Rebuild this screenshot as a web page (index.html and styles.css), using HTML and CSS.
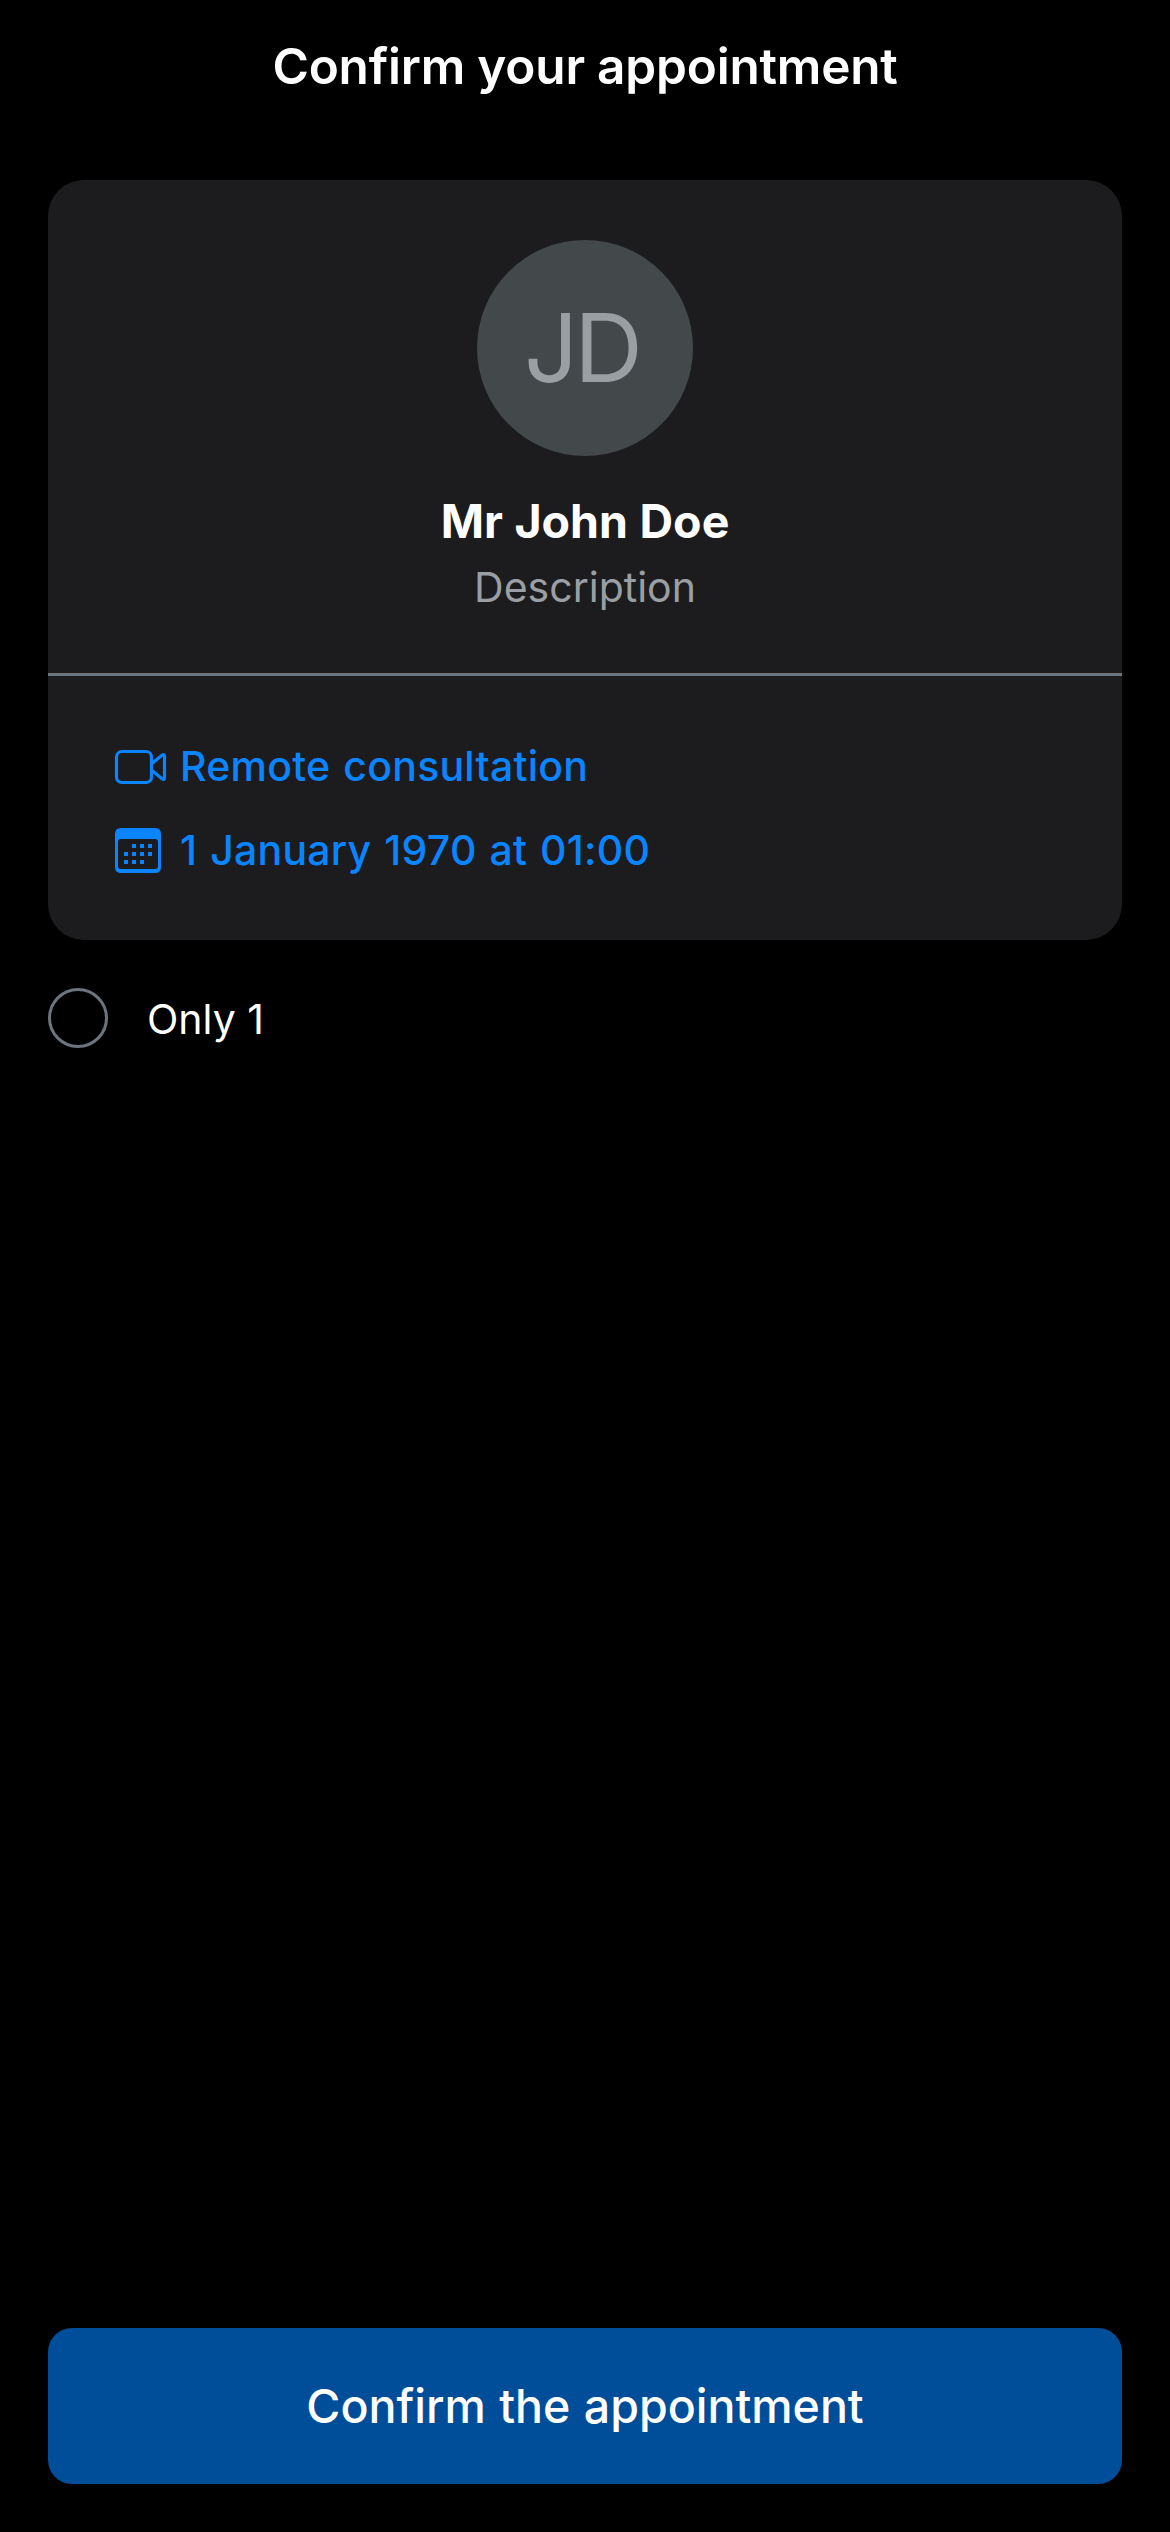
FILE: index.html
```html
<!DOCTYPE html>
<html lang="en">
<head>
<meta charset="utf-8">
<title>Confirm your appointment</title>
<link rel="stylesheet" href="styles.css">
</head>
<body>
<div class="screen">
  <header class="header"><h1 class="title"><span>Confirm your appointment</span></h1></header>
  <main class="content">
    <section class="card">
      <div class="profile">
        <div class="avatar"><span>JD</span></div>
        <h2 class="name"><span>Mr John Doe</span></h2>
        <p class="description"><span>Description</span></p>
      </div>
      <div class="details">
        <div class="detail">
          <svg class="icon" width="54" height="51" viewBox="0 0 54 51" fill="none" stroke="currentColor" stroke-width="3.2" stroke-linejoin="round">
            <rect x="2.500" y="10.500" width="35" height="31" rx="5.500"/>
            <path d="M38 22.500 48 14.200Q50.500 12.500 50.500 15.500V36.500Q50.500 39.500 48 37.800L38 29.500"/>
          </svg>
          <span>Remote consultation</span>
        </div>
        <div class="detail">
          <svg class="icon" width="54" height="51" viewBox="0 0 54 51" fill="currentColor">
            <path fill-rule="evenodd" d="M7 3H41Q47 3 47 9V42Q47 48 41 48H7Q1 48 1 42V9Q1 3 7 3ZM7 14Q4 14 4 17V41Q4 44 7 44H41Q44 44 44 41V17Q44 14 41 14Z"/>
            <path d="M18 19h4v4h-4zM26 19h4v4h-4zM34 19h4v4h-4zM10 27h4v4h-4zM18 27h4v4h-4zM26 27h4v4h-4zM34 27h4v4h-4zM10 35h4v4h-4zM18 35h4v4h-4zM26 35h4v4h-4z"/>
          </svg>
          <span>1 January 1970 at 01:00</span>
        </div>
      </div>
    </section>
    <label class="option"><span class="radio"></span><span class="option-label">Only 1</span></label>
  </main>
  <footer class="footer"><button class="confirm" type="button"><span>Confirm the appointment</span></button></footer>
</div>
</body>
</html>
```

FILE: styles.css
```css
* { box-sizing: border-box; }
body { margin: 0; background: #000; color: #fff; font-family: Inter, "Liberation Sans", sans-serif; }
h1, h2, p { margin: 0; }
.screen { display: flex; flex-direction: column; width: 1170px; height: 2532px; padding: 0 48px 48px; }
.header { height: 132px; display: flex; align-items: center; justify-content: center; }
.title { font-size: 49.5px; line-height: 60px; font-weight: 600; letter-spacing: -0.2px; white-space: nowrap; }
.content { flex: 1; padding-top: 48px; }
.card { background: #1c1c1e; border-radius: 36px; overflow: hidden; }
.profile { display: flex; flex-direction: column; align-items: center; padding: 60px 0 61px; border-bottom: 3px solid #6c757d; }
.avatar { width: 216px; height: 216px; border-radius: 50%; background: #43484b; color: #9a9fa3; display: flex; align-items: center; justify-content: center; padding-right: 7px; font-size: 95px; line-height: 116px; letter-spacing: -4px; }
.name { margin-top: 36px; font-size: 46.5px; line-height: 58px; font-weight: 700; word-spacing: 0.5px; }
.description { margin-top: 12px; font-size: 41px; line-height: 50px; color: #9a9fa3; }
.details { display: flex; flex-direction: column; gap: 33px; padding: 65px 66px 64px; color: #0a84ff; }
.detail { display: flex; align-items: center; gap: 12px; height: 51px; font-size: 41px; line-height: 51px; font-weight: 500; letter-spacing: 0.25px; word-spacing: 1.7px; }
.icon { flex: none; display: block; }
.option { display: flex; align-items: center; gap: 39px; height: 60px; margin-top: 48px; }
.radio { width: 60px; height: 60px; border: 3px solid #6c757d; border-radius: 50%; }
.option-label { font-size: 41px; line-height: 50px; padding-top: 2px; }
.footer { height: 156px; }
.confirm { display: block; width: 100%; height: 156px; border: 0; border-radius: 24px; background: #004e99; color: #fff; font: 500 46.5px/58px Inter, "Liberation Sans", sans-serif; word-spacing: 1px; }
```
